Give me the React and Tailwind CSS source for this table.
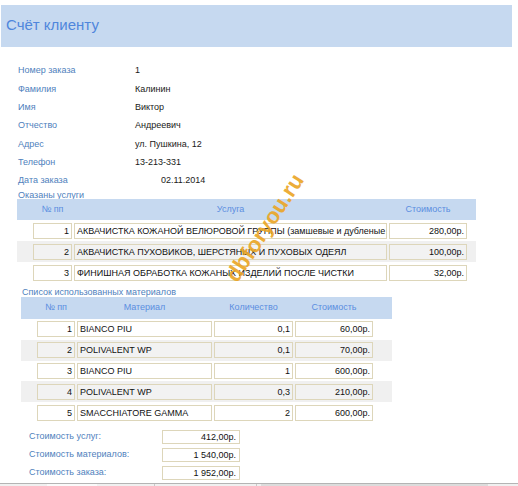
const FIELDS = [
  { label: 'Номер заказа', value: '1' },
  { label: 'Фамилия', value: 'Калинин' },
  { label: 'Имя', value: 'Виктор' },
  { label: 'Отчество', value: 'Андреевич' },
  { label: 'Адрес', value: 'ул. Пушкина, 12' },
  { label: 'Телефон', value: '13-213-331' },
  { label: 'Дата заказа', value: '02.11.2014', shift: true },
];

const SERVICES = [
  { n: 1, name: 'АКВАЧИСТКА КОЖАНОЙ ВЕЛЮРОВОЙ ГРУППЫ (замшевые и дубленые изделия)', cost: '280,00р.' },
  { n: 2, name: 'АКВАЧИСТКА ПУХОВИКОВ, ШЕРСТЯНЫХ И ПУХОВЫХ ОДЕЯЛ', cost: '100,00р.' },
  { n: 3, name: 'ФИНИШНАЯ ОБРАБОТКА КОЖАНЫХ ИЗДЕЛИЙ ПОСЛЕ ЧИСТКИ', cost: '32,00р.' },
];

const MATERIALS = [
  { n: 1, name: 'BIANCO PIU', qty: '0,1', cost: '60,00р.' },
  { n: 2, name: 'POLIVALENT WP', qty: '0,1', cost: '70,00р.' },
  { n: 3, name: 'BIANCO PIU', qty: '1', cost: '600,00р.' },
  { n: 4, name: 'POLIVALENT WP', qty: '0,3', cost: '210,00р.' },
  { n: 5, name: 'SMACCHIATORE GAMMA', qty: '2', cost: '600,00р.' },
];

const TOTALS = [
  { label: 'Стоимость услуг:', value: '412,00р.' },
  { label: 'Стоимость материалов:', value: '1 540,00р.' },
  { label: 'Стоимость заказа:', value: '1 952,00р.' },
];

function Box({ w, right, alt, children }) {
  return (
    <div
      className={`h-[16px] shrink-0 overflow-hidden whitespace-nowrap border border-[#ddd6ba] px-[2px] text-[9px] leading-[14px] text-[#111] ${
        right ? 'text-right' : 'text-left'
      } ${alt ? 'bg-[#f2f2f2]' : 'bg-white'}`}
      style={{ width: w }}
    >
      {children}
    </div>
  );
}

function Head({ w, children }) {
  return (
    <div className="shrink-0 text-center text-[9px] text-[#5b8ee0]" style={{ width: w }}>
      {children}
    </div>
  );
}

export default function App() {
  return (
    <div className="relative h-[486px] w-[518px] overflow-hidden bg-white font-['Liberation_Sans',Arial,sans-serif]">
      <div className="ml-[1px] mt-[5px] h-[42px] w-[511px] bg-[#c6d9f0] pl-[5px] pt-[10px]">
        <p className="text-[15px] leading-[20px] text-[#4f86dc]">Счёт клиенту</p>
      </div>

      <div className="mt-[15px] pl-[18px]">
        {FIELDS.map((f) => (
          <div key={f.label} className="flex h-[18.3px] items-center text-[9px]">
            <span className="w-[117px] text-[#4f81bd]">{f.label}</span>
            <span className={`text-[#1a1a1a] ${f.shift ? 'pl-[26px]' : ''}`}>{f.value}</span>
          </div>
        ))}
        <div className="h-[9px] overflow-hidden text-[9px] leading-[10px] text-[#4f81bd]">Оказаны услуги</div>
      </div>

      <div className="ml-[17px] w-[459px]">
        <div className="flex h-[21px] items-center gap-[2px] bg-[#c6d9f0] pl-[16px]">
          <Head w={39}>№ пп</Head>
          <Head w={313}>Услуга</Head>
          <Head w={78}>Стоимость</Head>
        </div>
        {SERVICES.map((s, i) => {
          const alt = i % 2 === 1;
          return (
            <div key={s.n} className={`flex h-[21px] items-center gap-[2px] pl-[16px] ${alt ? 'bg-[#f0f0f0]' : ''}`}>
              <Box w={39} right alt={alt}>{s.n}</Box>
              <Box w={313} alt={alt}>{s.name}</Box>
              <Box w={78} right alt={alt}>{s.cost}</Box>
            </div>
          );
        })}
      </div>

      <div className="h-[14px] pl-[22px] pt-[4px] text-[9px] leading-[10px] text-[#4f81bd]">
        Список использованных материалов
      </div>

      <div className="ml-[21px] w-[371px]">
        <div className="flex h-[22px] items-center gap-[2px] bg-[#c6d9f0] pl-[16px]">
          <Head w={38}>№ пп</Head>
          <Head w={135}>Материал</Head>
          <Head w={79}>Количество</Head>
          <Head w={78}>Стоимость</Head>
        </div>
        {MATERIALS.map((m, i) => {
          const alt = i % 2 === 1;
          return (
            <div key={m.n} className={`flex h-[20.8px] items-center gap-[2px] pl-[16px] ${alt ? 'bg-[#f0f0f0]' : ''}`}>
              <Box w={38} right alt={alt}>{m.n}</Box>
              <Box w={135} alt={alt}>{m.name}</Box>
              <Box w={79} right alt={alt}>{m.qty}</Box>
              <Box w={78} right alt={alt}>{m.cost}</Box>
            </div>
          );
        })}
      </div>

      <div className="mt-[5px] pl-[29px]">
        {TOTALS.map((t) => (
          <div key={t.label} className="flex h-[17.8px] items-center">
            <span className="w-[133px] text-[9px] text-[#4f81bd]">{t.label}</span>
            <div className="h-[14px] w-[78px] border border-[#ddd6ba] bg-white px-[3px] text-right text-[9px] leading-[12px] text-[#111]">
              {t.value}
            </div>
          </div>
        ))}
      </div>

      <div className="absolute bottom-0 left-0 flex h-[3px] w-full border-t border-[#b4b4b4] bg-[#f0f0f0]">
        <div className="ml-[47px] w-[50px] bg-[#fafafa]" />
        <div className="ml-[57px] w-px bg-[#c8c8c8]" />
        <div className="ml-[101px] w-px bg-[#c8c8c8]" />
        <div className="ml-[4px] w-[227px] bg-[#dcdcdc]" />
      </div>

      <span className="pointer-events-none absolute left-[203px] top-[216px] w-[124px] -rotate-[57deg] text-center text-[22px] font-bold leading-[24px] text-[#eba524] opacity-90">
        dbforyou.ru
      </span>
    </div>
  );
}
